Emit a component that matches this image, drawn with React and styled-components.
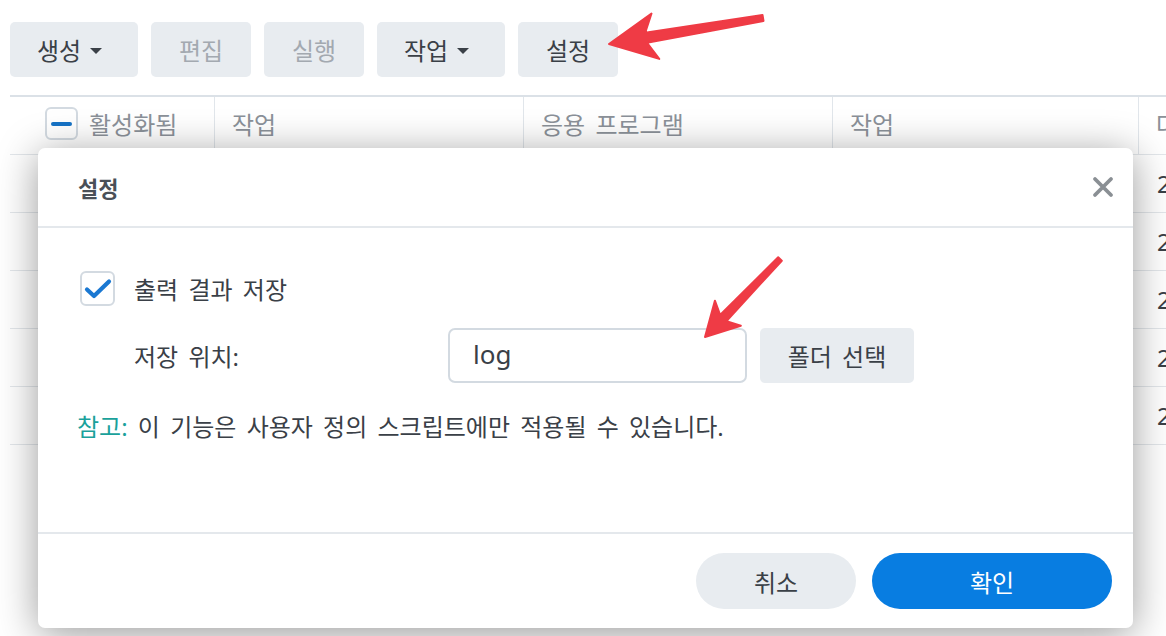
import styled, { createGlobalStyle } from 'styled-components'

const GlobalStyle = createGlobalStyle`
  html, body {
    margin: 0;
    padding: 0;
    background: #fff;
    overflow: hidden;
  }
  body {
    font-family: "Noto Sans", "Noto Sans CJK KR", sans-serif;
    color: #3a4047;
    word-spacing: 4px;
  }
`

const Page = styled.div`
  position: relative;
  width: 1166px;
  height: 636px;
  overflow: hidden;
  background: #fff;
`

const Toolbar = styled.div`
  display: flex;
  gap: 13px;
  padding: 22px 0 0 10px;
`

const ToolButton = styled.div`
  display: flex;
  align-items: center;
  justify-content: ${p => p.$wide ? 'flex-start' : 'center'};
  gap: 9px;
  height: 55px;
  width: ${p => p.$wide ? 128 : 100}px;
  padding-left: ${p => p.$wide ? 27 : 0}px;
  box-sizing: border-box;
  background: #e8ecf0;
  border-radius: 5px;
  font-size: 24px;
  color: ${p => p.$disabled ? '#a3a9b0' : '#3a4047'};
`

const Caret = styled.span`
  width: 0;
  height: 0;
  border-left: 6px solid transparent;
  border-right: 6px solid transparent;
  border-top: 6px solid #3a4047;
  margin-top: 2px;
`

const Table = styled.div`
  margin: 18px 0 0 10px;
  width: 1300px;
  border-top: 2px solid #dbe1e7;
`

const cols = '204px 309px 309px 306px 180px'

const HeaderRow = styled.div`
  display: grid;
  grid-template-columns: ${cols};
  height: 57px;
  border-bottom: 1px solid #e3e7eb;
`

const HeaderCell = styled.div`
  display: flex;
  align-items: center;
  gap: 11px;
  padding: 0 0 4px ${p => p.$first ? 35 : 17}px;
  border-left: ${p => p.$first ? 'none' : '1px solid #e1e6eb'};
  font-size: 24px;
  color: #8b9199;
  white-space: nowrap;
`

const Row = styled.div`
  display: grid;
  grid-template-columns: ${cols};
  height: 57px;
  border-bottom: 1px solid #e3e7eb;
`

const Cell = styled.div`
  display: flex;
  align-items: center;
  padding-left: 19px;
  font-size: 24px;
  color: #3a4047;
  white-space: nowrap;
`

const Box = styled.div`
  display: flex;
  align-items: center;
  justify-content: center;
  width: ${p => p.$size}px;
  height: ${p => p.$size}px;
  box-sizing: border-box;
  border: 2px solid #d3dae1;
  border-radius: 6px;
  background: #fff;
  flex-shrink: 0;
`

const Dash = styled.span`
  width: 21px;
  height: 4px;
  border-radius: 2px;
  background: #1673c6;
`

const Dialog = styled.div`
  position: absolute;
  left: 38px;
  top: 148px;
  width: 1095px;
  height: 480px;
  display: flex;
  flex-direction: column;
  background: #fff;
  border-radius: 7px;
  box-shadow: 0 6px 40px rgba(0, 0, 0, 0.4);
`

const DialogHeader = styled.div`
  display: flex;
  align-items: center;
  justify-content: space-between;
  height: 78px;
  padding: 0 19px 0 40px;
  border-bottom: 2px solid #e4e8ec;
  font-size: 22px;
  font-weight: 700;
  color: #4a5058;
`

const CloseButton = styled.div`
  display: flex;
  width: 22px;
  height: 22px;
`

const DialogBody = styled.div`
  flex: 1;
  display: flex;
  flex-direction: column;
  padding: 43px 40px 0 39px;
`

const CheckRow = styled.div`
  display: flex;
  align-items: center;
  gap: 19px;
  padding-left: 3px;
  font-size: 24px;
`

const FieldRow = styled.div`
  display: grid;
  grid-template-columns: 314px 299px auto;
  align-items: center;
  margin-top: 22px;
  padding-left: 57px;
  font-size: 24px;
`

const Input = styled.div`
  display: flex;
  align-items: center;
  height: 55px;
  box-sizing: border-box;
  padding: 0 0 3px 23px;
  border: 2px solid #d3dae1;
  border-radius: 7px;
  font-size: 26px;
`

const GreyButton = styled.div`
  display: flex;
  align-items: center;
  justify-content: center;
  width: 154px;
  height: 55px;
  margin-left: 13px;
  background: #e8ecf0;
  border-radius: 5px;
  font-size: 24px;
`

const Note = styled.div`
  margin-top: 25px;
  font-size: 24px;
  white-space: nowrap;
`

const NoteLabel = styled.span`
  color: #1aa19b;
`

const DialogFooter = styled.div`
  display: flex;
  justify-content: flex-end;
  align-items: center;
  gap: 16px;
  height: 94px;
  padding-right: 21px;
  border-top: 2px solid #e4e8ec;
`

const PillButton = styled.div`
  display: flex;
  align-items: center;
  justify-content: center;
  width: ${p => p.$w}px;
  height: 56px;
  border-radius: 28px;
  font-size: 24px;
  background: ${p => p.$primary ? '#087de1' : '#e8ecf0'};
  color: ${p => p.$primary ? '#fff' : '#3a4047'};
`

const Overlay = styled.svg`
  position: absolute;
  left: 0;
  top: 0;
  pointer-events: none;
`

function arrowPoints(tip, tail, headLen, headHalf, neckHalf, tailHalf) {
  const dx = tail[0] - tip[0], dy = tail[1] - tip[1]
  const len = Math.hypot(dx, dy)
  const u = [dx / len, dy / len], n = [-u[1], u[0]]
  const at = (a, p) => [tip[0] + u[0] * a + n[0] * p, tip[1] + u[1] * a + n[1] * p]
  const pts = [
    at(0, 0),
    at(headLen, -headHalf),
    at(headLen * 0.8, -neckHalf),
    at(len, -tailHalf),
    at(len, tailHalf),
    at(headLen * 0.8, neckHalf),
    at(headLen, headHalf)
  ]
  return pts.map(p => p.map(v => v.toFixed(1)).join(',')).join(' ')
}

const rows = ['2023-06-01 00:00', '2023-06-01 03:00', '2023-06-02 00:00', '2023-06-03 00:00', '2023-06-05 00:00']

export default function App() {
  return (
    <Page>
      <GlobalStyle/>
      <Toolbar>
        <ToolButton $wide>생성 <Caret/></ToolButton>
        <ToolButton $disabled>편집</ToolButton>
        <ToolButton $disabled>실행</ToolButton>
        <ToolButton $wide>작업 <Caret/></ToolButton>
        <ToolButton>설정</ToolButton>
      </Toolbar>

      <Table>
        <HeaderRow>
          <HeaderCell $first><Box $size={33}><Dash/></Box>활성화됨</HeaderCell>
          <HeaderCell>작업</HeaderCell>
          <HeaderCell>응용 프로그램</HeaderCell>
          <HeaderCell>작업</HeaderCell>
          <HeaderCell>다음 실행 시간</HeaderCell>
        </HeaderRow>
        {rows.map(r => (
          <Row key={r}>
            <Cell/><Cell/><Cell/><Cell/>
            <Cell>{r}</Cell>
          </Row>
        ))}
      </Table>

      <Dialog>
        <DialogHeader>
          설정
          <CloseButton>
            <svg width="22" height="22" viewBox="0 0 22 22">
              <path d="M3 3L19 19M19 3L3 19" stroke="#8a8f94" strokeWidth="3.8" strokeLinecap="round"/>
            </svg>
          </CloseButton>
        </DialogHeader>
        <DialogBody>
          <CheckRow>
            <Box $size={35}>
              <svg width="28" height="22" viewBox="0 0 28 22">
                <path d="M3 11.5L10 18L25 3.5" fill="none" stroke="#1a78d2" strokeWidth="4.2" strokeLinecap="round" strokeLinejoin="round"/>
              </svg>
            </Box>
            출력 결과 저장
          </CheckRow>
          <FieldRow>
            <span>저장 위치:</span>
            <Input>log</Input>
            <GreyButton>폴더 선택</GreyButton>
          </FieldRow>
          <Note><NoteLabel>참고:</NoteLabel> 이 기능은 사용자 정의 스크립트에만 적용될 수 있습니다.</Note>
        </DialogBody>
        <DialogFooter>
          <PillButton $w={160}>취소</PillButton>
          <PillButton $w={240} $primary>확인</PillButton>
        </DialogFooter>
      </Dialog>

      <Overlay width="1166" height="636">
        <polygon points={arrowPoints([609, 44], [763, 18], 47, 23, 5, 3)} fill="#ef3b45" stroke="#ef3b45" strokeWidth="2" strokeLinejoin="round"/>
        <polygon points={arrowPoints([705, 337], [780, 259], 33, 18, 4.5, 2.5)} fill="#ef3b45" stroke="#ef3b45" strokeWidth="2" strokeLinejoin="round"/>
      </Overlay>
    </Page>
  )
}
